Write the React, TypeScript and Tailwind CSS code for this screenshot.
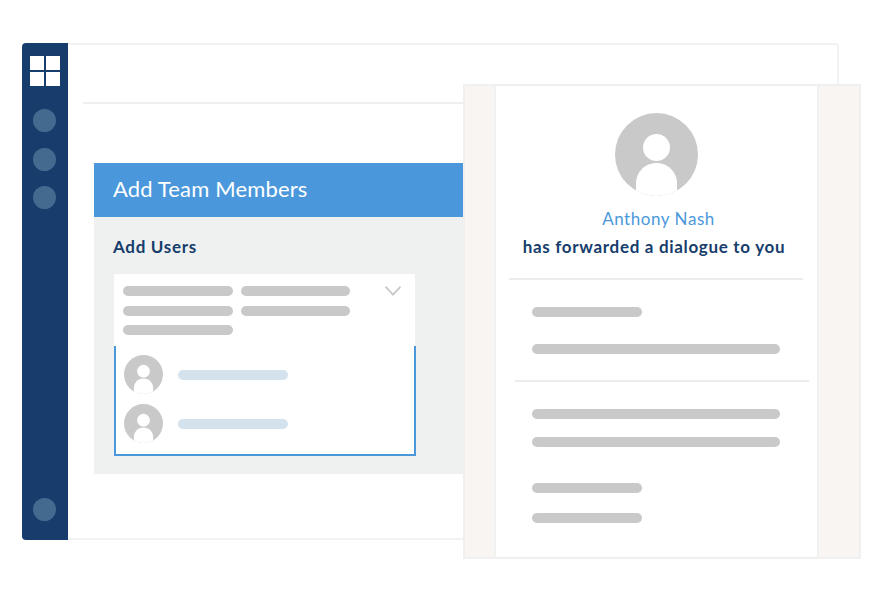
import React from "react";

const font = { fontFamily: '"Lato", "Liberation Sans", sans-serif' };

function Avatar({ className }: { className: string }) {
  return (
    <svg viewBox="0 0 83 83" className={className}>
      <defs>
        <clipPath id="av">
          <circle cx="41.5" cy="41.5" r="41.5" />
        </clipPath>
      </defs>
      <circle cx="41.5" cy="41.5" r="41.5" fill="#c9c9c9" />
      <circle cx="41.5" cy="34.5" r="13.5" fill="#fff" />
      <path d="M21 83V70.5C21 59 30 50 41.5 50S62 59 62 70.5V83Z" fill="#fff" clipPath="url(#av)" />
    </svg>
  );
}

function Pill({ className }: { className: string }) {
  return <div className={`h-[10px] rounded-full ${className}`} />;
}

function Dot() {
  return <div className="w-[23px] h-[23px] rounded-full bg-[#456a90] ml-[3px]" />;
}

export default function App() {
  return (
    <div className="relative w-[878px] h-[600px] bg-white overflow-hidden" style={font}>
      <div className="absolute left-[22px] top-[43px] w-[817px] h-[497px] flex">
        <aside className="w-[46px] h-full bg-[#163d6b] rounded-l-[4px] flex flex-col pl-[8px] pt-[13px] pb-[19px]">
          <div className="grid grid-cols-[14px_14px] grid-rows-[14px_14px] gap-[2px] w-[30px]">
            <div className="bg-white" />
            <div className="bg-white" />
            <div className="bg-white" />
            <div className="bg-white" />
          </div>
          <div className="mt-[23px] flex flex-col gap-[15.5px]">
            <Dot />
            <Dot />
            <Dot />
          </div>
          <div className="mt-auto">
            <Dot />
          </div>
        </aside>
        <main className="flex-1 border-y-2 border-r-2 border-[#f2f2f2] rounded-r-[4px] bg-white">
          <div className="h-[59px] ml-[15px] border-b-2 border-[#eeeff0]" />
          <section className="mt-[59px] ml-[26px] w-[369px]">
            <h2 className="h-[54px] bg-[#4a98db] text-white text-[22px] tracking-[0.15px] leading-[52px] pl-[19px]">
              Add Team Members
            </h2>
            <div className="h-[257px] bg-[#eff1f1] pt-[20px] pl-[20px] pr-[48px]">
              <h3 className="text-[17px] tracking-[0.7px] leading-5 font-bold text-[#163d6b] -ml-px">Add Users</h3>
              <div className="mt-[17px] h-[72px] bg-white relative pl-[9px] pt-[12px] flex flex-col gap-[9.5px]">
                <div className="flex gap-[8px]">
                  <Pill className="w-[110px] bg-[#c9c9c9]" />
                  <Pill className="w-[109px] bg-[#c9c9c9]" />
                </div>
                <div className="flex gap-[8px]">
                  <Pill className="w-[110px] bg-[#c9c9c9]" />
                  <Pill className="w-[109px] bg-[#c9c9c9]" />
                </div>
                <Pill className="w-[110px] bg-[#c9c9c9]" />
                <svg viewBox="0 0 16 10" className="absolute right-[14px] top-[12px] w-[16px] h-[10px]" fill="none" stroke="#c9c9c9" strokeWidth="1.8">
                  <path d="M0.5 0.7 8 8.7 15.5 0.7" />
                </svg>
              </div>
              <div className="h-[110px] w-[302px] bg-white border-2 border-t-0 border-[#4a98db] pl-[8px] pt-[9px] flex flex-col gap-[10px]">
                {[0, 1].map((i) => (
                  <div key={i} className="flex items-center gap-[15px]">
                    <Avatar className="w-[39px] h-[39px]" />
                    <Pill className="w-[110px] bg-[#d3e2ec]" />
                  </div>
                ))}
              </div>
            </div>
          </section>
        </main>
      </div>

      <div className="absolute left-[463px] top-[84px] w-[398px] h-[475px] bg-[#f8f5f2] border-2 border-[#f0f0f0] pl-[29px]">
        <div className="w-[325px] h-full bg-white border-x-2 border-[#f0f2f2] flex flex-col items-center pt-[27px]">
          <Avatar className="w-[83px] h-[83px] shrink-0" />
          <p className="mt-[13px] text-[17px] leading-5 text-[#4a98db] tracking-[0.55px] pl-[4px]">Anthony Nash</p>
          <p className="mt-[8px] text-[17px] leading-5 font-bold text-[#163d6b] tracking-[0.68px] pr-[5px]">has forwarded a dialogue to you</p>
          <div className="self-stretch">
            <div className="mt-[21px] ml-[13px] w-[294px] h-[2px] bg-[#ececec]" />
            <Pill className="mt-[27px] ml-[36px] w-[110px] bg-[#c9c9c9]" />
            <Pill className="mt-[27px] ml-[36px] w-[248px] bg-[#c9c9c9]" />
            <div className="mt-[26px] ml-[19px] w-[294px] h-[2px] bg-[#ececec]" />
            <Pill className="mt-[27px] ml-[36px] w-[248px] bg-[#c9c9c9]" />
            <Pill className="mt-[18px] ml-[36px] w-[248px] bg-[#c9c9c9]" />
            <Pill className="mt-[36px] ml-[36px] w-[110px] bg-[#c9c9c9]" />
            <Pill className="mt-[20px] ml-[36px] w-[110px] bg-[#c9c9c9]" />
          </div>
        </div>
      </div>
    </div>
  );
}
